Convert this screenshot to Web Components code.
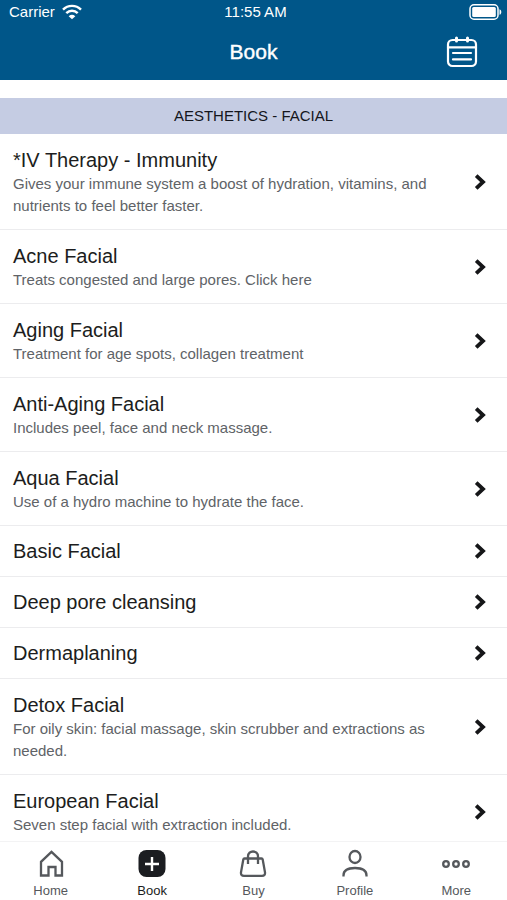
<!DOCTYPE html>
<html lang="en">
<head>
<meta charset="utf-8">
<meta name="viewport" content="width=device-width, initial-scale=1">
<title>Book</title>
<style>
body { margin: 0; font-family: "Liberation Sans", Arial, sans-serif; color: #1c1d20; background: #fff; }
</style>
</head>
<body>
<booking-app>
  <status-bar slot="top">11:55 AM</status-bar>
  <page-header slot="top">Book</page-header>
  <section-title>AESTHETICS - FACIAL</section-title>
  <service-row name="*IV Therapy - Immunity">Gives your immune system a boost of hydration, vitamins, and nutrients to feel better faster.</service-row>
  <service-row name="Acne Facial">Treats congested and large pores. Click here</service-row>
  <service-row name="Aging Facial">Treatment for age spots, collagen treatment</service-row>
  <service-row name="Anti-Aging Facial">Includes peel, face and neck massage.</service-row>
  <service-row name="Aqua Facial">Use of a hydro machine to hydrate the face.</service-row>
  <service-row name="Basic Facial"></service-row>
  <service-row name="Deep pore cleansing"></service-row>
  <service-row name="Dermaplaning"></service-row>
  <service-row name="Detox Facial">For oily skin: facial massage, skin scrubber and extractions as needed.</service-row>
  <service-row name="European Facial">Seven step facial with extraction included.</service-row>
  <tab-bar slot="bottom">
    <tab-item icon="home">Home</tab-item>
    <tab-item icon="book" active>Book</tab-item>
    <tab-item icon="buy">Buy</tab-item>
    <tab-item icon="profile">Profile</tab-item>
    <tab-item icon="more">More</tab-item>
  </tab-bar>
</booking-app>
<script>
function define(name, render) {
  customElements.define(name, class extends HTMLElement {
    connectedCallback() {
      if (!this.shadowRoot) this.attachShadow({ mode: "open" }).innerHTML = render(this);
    }
  });
}

define("booking-app", () => `
<style>
  :host { display: flex; flex-direction: column; height: 100vh; }
  main { flex: 1; min-height: 0; overflow-y: auto; scrollbar-width: none; padding-top: 18px; box-sizing: border-box; }
</style>
<slot name="top"></slot><main><slot></slot></main><slot name="bottom"></slot>`);

define("status-bar", () => `
<style>
  :host { display: grid; grid-template-columns: 1fr auto 1fr; align-items: center; height: 24px; padding: 0 5px 0 9px; background: #005689; color: #fff; font-size: 15px; line-height: 16px; }
  .carrier { display: flex; align-items: center; gap: 7px; }
  .battery { justify-self: end; }
  svg { display: block; }
</style>
<span class="carrier">Carrier
  <svg width="20" height="16" viewBox="0 0 20 16" fill="none" stroke="#fff" stroke-width="2.4" aria-hidden="true"><path d="M1 5.6C6 .6 14 .6 19 5.6M4.3 9.2c3.2-3.3 8.2-3.3 11.4 0"/><path d="M6.7 12.2q3.3-2.8 6.6 0L10 15.2z" fill="#fff" stroke="none"/></svg>
</span>
<span><slot></slot></span>
<svg class="battery" width="33" height="16" viewBox="0 0 33 16" fill="none" aria-hidden="true"><rect x="1" y=".8" width="28" height="14.4" rx="4" stroke="#fff" stroke-width="1.5"/><rect x="3.2" y="3" width="23.6" height="10" rx="1.5" fill="#fff"/><path d="M30.5 5.2c2.4.8 2.4 4.8 0 5.6z" fill="#fff"/></svg>`);

define("page-header", () => `
<style>
  :host { display: grid; grid-template-columns: 1fr auto 1fr; align-items: center; height: 56px; padding: 0 28px; background: #005689; color: #fff; }
  h1 { grid-column: 2; margin: 0; font-size: 21px; line-height: 24px; font-weight: 400; -webkit-text-stroke: .4px #fff; }
  button { justify-self: end; padding: 0; border: 0; background: none; color: inherit; }
  svg { display: block; }
</style>
<h1><slot></slot></h1>
<button aria-label="Calendar"><svg width="34" height="32" viewBox="0 0 34 32" fill="none" stroke="currentColor" stroke-width="2.2" stroke-linecap="round"><rect x="3" y="4" width="28" height="26" rx="4.5"/><path d="M3 11.3h28M8 17h18M8 23.4h18"/><path d="M11.5 2v3M22.5 2v3" stroke-width="3"/></svg></button>`);

define("section-title", () => `
<style>
  :host { display: block; background: #c5cce3; color: #14161c; }
  h2 { margin: 0; padding: 8px; font-size: 15px; line-height: 20px; font-weight: 400; text-align: center; }
</style>
<h2><slot></slot></h2>`);

define("service-row", el => `
<style>
  :host { display: block; border-bottom: 1px solid #ececee; }
  a { display: flex; align-items: center; justify-content: space-between; gap: 24px; padding: 13px 20px 12px 13px; color: inherit; text-decoration: none; }
  a.short { padding: 12px 20px 12px 13px; }
  .title { display: block; font-size: 20px; line-height: 26px; }
  .text { display: block; font-size: 15px; line-height: 22px; color: #606367; }
  svg { flex: none; display: block; }
</style>
<a href="#" class="${el.textContent ? "" : "short"}">
  <span><span class="title">${el.getAttribute("name")}</span>${el.textContent ? '<span class="text"><slot></slot></span>' : ""}</span>
  <svg width="13" height="16" viewBox="0 0 13 16" fill="none" stroke="#151618" stroke-width="3.8" aria-hidden="true"><path d="M2.200 1.700 9 8l-6.800 6.300"/></svg>
</a>`);

define("tab-bar", () => `
<style>
  :host { display: block; background: #fff; border-top: 1px solid #f3f3f4; }
  nav { display: grid; grid-template-columns: repeat(5, 1fr); }
</style>
<nav aria-label="Main"><slot></slot></nav>`);

const icons = {
  home: '<path d="M5 26.500V12.800L15.500 2.800 26 12.800v13.700h-6.500v-8.500h-7v8.500z"/>',
  book: '<rect x="1.500" y="1" width="27" height="27" rx="8" fill="currentColor" stroke="none"/><path d="M15 8v14M8 15h14" stroke="#fff" stroke-width="2.400"/>',
  buy: '<path d="M6.500 9.500h17q1 0 1.200 1l2.300 12.800q.4 3.500-3 3.500H6q-3.400 0-3-3.500l2.300-12.800q.2-1 1.200-1z"/><path d="M10 15V7.500C10 .8 20 .8 20 7.500V15"/>',
  profile: '<ellipse cx="15" cy="8" rx="5.500" ry="6"/><path d="M3.500 27.500v-1c0-4.500 4-7.500 11.500-7.500s11.500 3 11.500 7.500v1"/>',
  more: '<circle cx="5" cy="15" r="2.800"/><circle cx="15" cy="15" r="2.800"/><circle cx="25" cy="15" r="2.800"/>'
};

define("tab-item", el => `
<style>
  :host { display: block; color: #55585c; }
  :host([active]) { color: #1b1d21; }
  a { display: flex; flex-direction: column; align-items: center; gap: 5px; padding: 7px 0 2px; color: inherit; text-decoration: none; font-size: 13px; line-height: 14px; }
  svg { display: block; width: 30px; height: 30px; }
</style>
<a href="#"${el.hasAttribute("active") ? ' aria-current="page"' : ""}><svg viewBox="0 0 30 30" fill="none" stroke="currentColor" stroke-width="2.300" aria-hidden="true">${icons[el.getAttribute("icon")]}</svg><span><slot></slot></span></a>`);
</script>
</body>
</html>
